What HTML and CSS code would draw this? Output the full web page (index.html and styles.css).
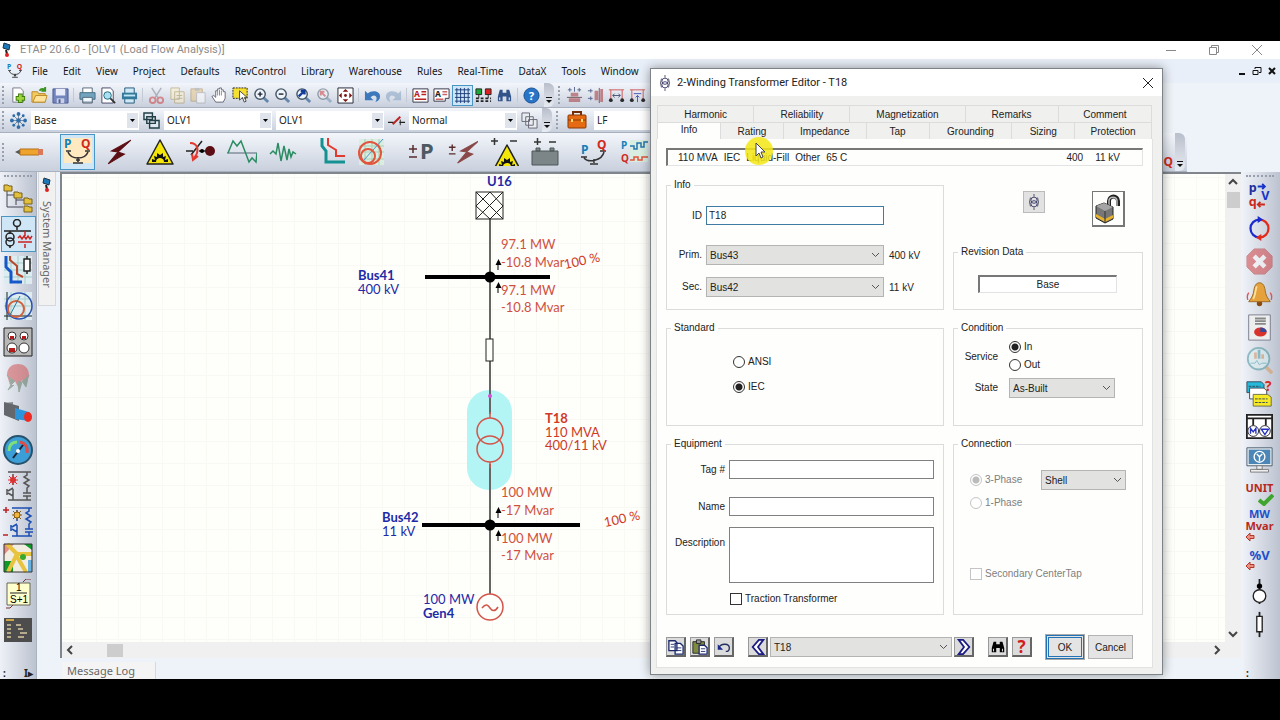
FILE: index.html
```html
<!DOCTYPE html>
<html lang="en">
<head>
    <meta charset="UTF-8">
    <meta name="viewport" content="width=device-width, initial-scale=1.0">
    <title>ETAP 20.6.0 - [OLV1 (Load Flow Analysis)]</title>
    <link rel="stylesheet" href="styles.css">
</head>
<body>
<!-- shapes used more than once -->
<svg class="defs" width="0" height="0">
    <symbol id="bolt" viewBox="0 0 26 26"><path d="M24 2L6 12l6 1-9 11 15-9-6-2z" /></symbol>
    <symbol id="warning" viewBox="0 0 28 28">
        <path d="M14 2L27 26H1z" fill="#f5e60a" stroke="#222" stroke-width="1.5" stroke-linejoin="round"/>
        <path d="M6 24v-3l3 1-1-4 3 1v-4l3 2 3-2v4l3-1-1 4 3-1v3h-4c0-3-2-4-4-4s-4 1-4 4z" fill="#111"/>
    </symbol>
    <symbol id="scale" viewBox="0 0 28 28">
        <path d="M2 13h5M21 13h5M4 14c2 5 6 6 10 6s8-1 10-6M14 19v5M9 25h10M12 22h4" fill="none" stroke="#333" stroke-width="1.6"/>
        <text x="0" y="10" font-size="12" fill="#1580b8">P</text>
        <text x="17" y="10" font-size="12" fill="#cf2a1c">Q</text>
    </symbol>
    <symbol id="etap" viewBox="0 0 12 16">
        <path d="M3 1l6 2-1 5-6-2z" fill="#1c78b8" stroke="#234" /><path d="M5 8l1 4" stroke="#222" stroke-width="2"/><circle cx="6" cy="13" r="2" fill="#d22"/>
    </symbol>
    <symbol id="lens" viewBox="0 0 18 18">
        <path d="M11 11l5 5" stroke="#6687ad" stroke-width="3"/><circle cx="7.5" cy="7.5" r="5.5" fill="#eef5fb" stroke="#456" stroke-width="1.5"/>
    </symbol>
    <symbol id="binoc" viewBox="0 0 18 18">
        <path d="M4 3h3v3h4V3h3l2 7v5h-5v-5H7v5H2v-5z"/><path d="M4 11v3M14 11v3" stroke="#fff"/>
    </symbol>
    <symbol id="winding" viewBox="0 0 12 18">
        <path d="M6 0v3M6 15v3M2 4L1 9l1 5M10 4l1 5-1 5" fill="none" stroke="#445"/><circle cx="6" cy="7" r="3.5" fill="none" stroke="#336"/><circle cx="6" cy="11" r="3.5" fill="none" stroke="#336"/>
    </symbol>
    <symbol id="back" viewBox="0 0 10 10"><path d="M1 5l4-4v2.5h4v3H5V9z" fill="#e99080" stroke="#b3382a"/></symbol>
</svg>

<div class="app">
    <header class="titlebar">
        <svg class="app-icon" width="12" height="16"><use href="#etap"/></svg>
        <span class="title">ETAP 20.6.0 - [OLV1 (Load Flow Analysis)]</span>
        <div class="window-controls">
            <button aria-label="Minimize"><svg width="12" height="12"><path d="M1 6.5h10"/></svg></button>
            <button aria-label="Restore"><svg width="12" height="12"><path d="M1.5 3.5h7v7h-7zM3.5 3v-1.5h7v7H9"/></svg></button>
            <button aria-label="Close"><svg width="12" height="12"><path d="M1 1l10 10M11 1L1 11"/></svg></button>
        </div>
    </header>

    <nav class="menubar">
        <svg class="menu-icon" width="16" height="16"><use href="#scale"/></svg>
        <button>File</button>
        <button>Edit</button>
        <button>View</button>
        <button>Project</button>
        <button>Defaults</button>
        <button>RevControl</button>
        <button>Library</button>
        <button>Warehouse</button>
        <button>Rules</button>
        <button>Real-Time</button>
        <button>DataX</button>
        <button>Tools</button>
        <button>Window</button>
        <div class="doc-controls">
            <svg width="8" height="10"><path d="M1 8h6"/></svg>
            <svg class="thin" width="10" height="10"><path d="M1 4.5h5v4H1zM3 3V1.5h6v5H7"/></svg>
            <svg width="8" height="10"><path d="M1 2l6 6M7 2L1 8"/></svg>
        </div>
    </nav>

    <div class="toolbar toolbar-main">
        <span class="grip"></span>
        <button><svg viewBox="0 0 18 18"><path d="M3 1h8l3 3v12H3z" fill="#fff" stroke="#778"/><path d="M11 7v10M6 12h10" stroke="#3f7d10" stroke-width="5"/><path d="M11 8v8M7 12h8" stroke="#9cd53b" stroke-width="3"/></svg></button>
        <button><svg viewBox="0 0 18 18"><path d="M1 16V5h6l1 2h7v9z" fill="#f4c95d" stroke="#b98a2c"/><path d="M2 16l3-7h12l-2 7z" fill="#ffe39a" stroke="#b98a2c"/><path d="M9 4c2-3 4-2 6-1M15 0v4h-4" fill="none" stroke="#3a9420" stroke-width="2"/></svg></button>
        <button><svg viewBox="0 0 18 18"><path d="M1 2h16v15H1z" fill="#7385bd" stroke="#4c5c94"/><path d="M4 2h10v7H4z" fill="#e8ecfa"/><path d="M5 12h8v5H5z" fill="#c8cfe6"/><path d="M7 13h2v4H7z" fill="#4c5c94"/></svg></button>
        <span class="sep"></span>
        <button><svg viewBox="0 0 18 18"><path d="M4 1h10v6H4zM4 11h10v6H4z" fill="#fff" stroke="#567"/><path d="M1 6h16v7H1z" fill="#72a4bf" stroke="#446b83"/><path d="M4 11h10v5H4z" fill="#eef8ff" stroke="#567"/></svg></button>
        <button><svg viewBox="0 0 18 18"><path d="M2 1h9l3 3v13H2z" fill="#fff" stroke="#446"/><path d="M10 11l6 6" stroke="#333" stroke-width="2"/><circle cx="8" cy="9" r="4" fill="#a9e0f2" stroke="#267"/></svg></button>
        <button><svg viewBox="0 0 18 18"><path d="M4 1h10v16H4z" fill="#cfeaf6" stroke="#257"/><path d="M1 6h16v7H1z" fill="#34789a"/><path d="M3 9h12" stroke="#bfe6f7" stroke-width="2"/></svg></button>
        <span class="sep"></span>
        <button class="off"><svg viewBox="0 0 18 18"><path d="M4 1l7 11M14 1L7 12" stroke="#778" stroke-width="1.5"/><circle cx="5" cy="14" r="3" fill="none" stroke="#c33" stroke-width="2"/><circle cx="13" cy="14" r="3" fill="none" stroke="#c33" stroke-width="2"/></svg></button>
        <button class="off"><svg viewBox="0 0 18 18"><path d="M2 1h9v12H2zM6 5h10v12H6z" fill="#fdf1c9" stroke="#a68a44"/><path d="M8 9h6M8 12h6" stroke="#a68a44"/></svg></button>
        <button class="off"><svg viewBox="0 0 18 18"><path d="M1 2h12v13H1z" fill="#e8c37c" stroke="#a0803c"/><path d="M5 1h5v3H5z" fill="#999"/><path d="M7 6h9v11H7z" fill="#fff" stroke="#999"/></svg></button>
        <button><svg viewBox="0 0 18 18"><path d="M5 16l-4-6 2-1 2 2V4h2V2h2V1h2v2h2v2h2v7l-2 4z" fill="#fff" stroke="#667"/><path d="M7 4v5M9 3v6M11 4v5" stroke="#889"/></svg></button>
        <button><svg viewBox="0 0 18 18"><path d="M1 1h15v11H1z" fill="#f7df32" stroke="#222" stroke-dasharray="2 1"/><path d="M8 4v10l3-3 2 5 2-1-2-4h3z" fill="#fff" stroke="#444"/></svg></button>
        <button><svg viewBox="0 0 18 18"><use href="#lens"/><path d="M5 7.5h5M7.5 5v5" stroke="#223" stroke-width="1.5"/></svg></button>
        <button><svg viewBox="0 0 18 18"><use href="#lens"/><path d="M5 7.5h5" stroke="#223" stroke-width="1.5"/></svg></button>
        <button><svg viewBox="0 0 18 18"><use href="#lens"/><path d="M4 10l5-5M6 4h4v4" stroke="#113a9a" stroke-width="2.5" fill="none"/></svg></button>
        <button class="off"><svg viewBox="0 0 18 18"><use href="#lens"/><path d="M10 10L5 5M5 9V5h4" stroke="#c33" stroke-width="2" fill="none"/></svg></button>
        <button><svg viewBox="0 0 18 18"><path d="M1 1h16v16H1z" fill="#fff" stroke="#223"/><path d="M9 2l3 3H6zM9 16l3-3H6zM2 9l3-3v6zM16 9l-3-3v6z" fill="#7c1414"/><circle cx="9" cy="9" r="1.5" fill="#7c1414"/></svg></button>
        <span class="sep"></span>
        <button><svg viewBox="0 0 18 18"><path d="M1 4l3 3c4-4 13-3 13 3 0 3-2 5-5 6 2-3 2-6-1-7-2 0-3 1-4 2l3 3H1z" fill="#3c78bb"/></svg></button>
        <button class="off"><svg viewBox="0 0 18 18"><path d="M17 4l-3 3C10 3 1 4 1 10c0 3 2 5 5 6-2-3-2-6 1-7 2 0 3 1 4 2l-3 3h9z" fill="#7c9cbd"/></svg></button>
        <span class="sep"></span>
        <button><svg viewBox="0 0 18 18"><path d="M1 2h16v14H1z" fill="#fff" stroke="#334"/><text x="2" y="11" font-size="9" fill="#b22">A</text><path d="M10 5h5M10 8h5M3 13h12" stroke="#b22" stroke-width="1.5"/></svg></button>
        <button><svg viewBox="0 0 18 18"><path d="M1 2h16v10h-4v3H1z" fill="#fff" stroke="#334"/><text x="2" y="11" font-size="9" fill="#222">A</text><path d="M10 5h5M10 8h5M3 13h8" stroke="#c66" stroke-width="1.5"/></svg></button>
        <button class="on"><svg viewBox="0 0 18 18"><path d="M3 1v16M7 1v16M11 1v16M15 1v16M1 3h16M1 7h16M1 11h16M1 15h16" stroke="#1b3c78"/></svg></button>
        <button><svg viewBox="0 0 18 18"><path d="M1 2h6v6H1z" fill="#18a838" stroke="#222"/><path d="M11 2h6v6h-6z" fill="#dd2020" stroke="#222"/><path d="M4 8v4M14 8v4" stroke="#222"/><path d="M1 12h16M1 15h16" stroke="#222" stroke-width="2" stroke-dasharray="3 2"/></svg></button>
        <button><svg viewBox="0 0 18 18" fill="#31548a"><use href="#binoc"/></svg></button>
        <span class="sep"></span>
        <button><svg viewBox="0 0 18 18"><circle cx="9" cy="9" r="8" fill="#2874c7" stroke="#174f91"/><text x="6" y="14" font-size="12" fill="#fff">?</text></svg></button>
        <span class="cap"></span>
        <span class="grip"></span>
        <button class="dim"><svg viewBox="0 0 18 18"><path d="M9 0v5M2 3h4M12 3h4M4 1v4M14 1v4" stroke="#347"/><path d="M5 6h8v4H5zM3 12h12v4H3z" fill="#b56a72"/><path d="M1 11h16" stroke="#533"/></svg></button>
        <button class="dim"><svg viewBox="0 0 18 18"><path d="M1 4h5M1 12h5M4 2v4M4 10v4" stroke="#347"/><path d="M8 4h4v10H8zM14 2h3v14h-3z" fill="#b56a72"/><path d="M13 1v16" stroke="#533"/></svg></button>
        <button class="dim"><svg viewBox="0 0 18 18"><path d="M1 3h16M3 3v10M15 3v10" stroke="#c33"/><path d="M5 9h8M7 7L5 9l2 2M11 7l2 2-2 2" stroke="#235" fill="none"/><circle cx="3" cy="14" r="2"/><circle cx="15" cy="14" r="2"/></svg></button>
        <button class="dim"><svg viewBox="0 0 18 18"><path d="M1 3h16M3 3v10M15 3v10" stroke="#c33"/><path d="M5 7h8M9 16V9M7 11l2-2 2 2" stroke="#23a" fill="none"/><circle cx="3" cy="14" r="2"/><circle cx="15" cy="14" r="2"/></svg></button>
    </div>

    <div class="toolbar toolbar-view">
        <span class="grip"></span>
        <button><svg viewBox="0 0 18 18"><path d="M9 2v14M2 9h14M4 4l10 10M14 4L4 14" stroke="#789"/><g fill="#2c6cab"><circle cx="9" cy="9" r="2.5"/><circle cx="9" cy="2" r="2"/><circle cx="9" cy="16" r="2"/><circle cx="2" cy="9" r="2"/><circle cx="16" cy="9" r="2"/><circle cx="4" cy="4" r="1.5"/><circle cx="14" cy="14" r="1.5"/><circle cx="14" cy="4" r="1.5"/><circle cx="4" cy="14" r="1.5"/></g></svg></button>
        <select class="tool-select" aria-label="Revision"><option>Base</option></select>
        <button><svg viewBox="0 0 18 18"><path d="M1 1h9v7H1zM4 5h9v7H4zM7 9h10v8H7z" fill="#dfe8ee" stroke="#223f48" stroke-width="1.5"/></svg></button>
        <select class="tool-select" aria-label="Presentation"><option>OLV1</option></select>
        <select class="tool-select" aria-label="View"><option>OLV1</option></select>
        <button><svg viewBox="0 0 18 18"><path d="M0 11h6M12 11h6" stroke="#222" stroke-width="1.5"/><path d="M5 13l8-8" stroke="#b22" stroke-width="2"/><path d="M13 8v6" stroke="#222"/></svg></button>
        <select class="tool-select" aria-label="Configuration"><option>Normal</option></select>
        <button><svg viewBox="0 0 18 18"><path d="M1 1h8v9H1zM5 5h8v9H5zM8 8h9v9H8z" fill="#e9edf0" stroke="#667"/></svg></button>
        <span class="cap"></span>
        <span class="grip"></span>
        <button class="case"><svg viewBox="0 0 20 18"><path d="M6 4V1h8v3" fill="none" stroke="#722d05" stroke-width="2"/><rect x="1" y="4" width="18" height="13" rx="1" fill="#e66a12" stroke="#8a3806"/><path d="M1 9h18" stroke="#8a3806"/><path d="M4 8h2v3H4zM14 8h2v3h-2z" fill="#ffd76a"/></svg></button>
        <select class="tool-select" aria-label="Study case"><option>LF</option></select>
    </div>

    <div class="toolbar toolbar-study">
        <span class="grip"></span>
        <button><svg viewBox="0 0 28 28"><path d="M0 14l6-3v6z" fill="#555"/><path d="M5 11h19v6H5z" fill="#efa42e" stroke="#b5701a"/><path d="M23 11h5v6h-5z" fill="#d9795a"/></svg></button>
        <span class="sep"></span>
        <button class="on"><svg viewBox="0 0 28 28"><path d="M0 0h28v25H0z" fill="#ffe9c0"/><use href="#scale"/></svg></button>
        <button><svg viewBox="0 0 28 28" fill="#5b0f14" stroke="#5b0f14"><use href="#bolt"/></svg></button>
        <button><svg viewBox="0 0 28 28"><use href="#warning"/></svg></button>
        <button><svg viewBox="0 0 30 28"><path d="M0 13h7M5 17L16 3M13 13h8" stroke="#222" stroke-width="1.5"/><path d="M4 5c8 0 10 8 4 15M12 18l-5 4-1-6" fill="none" stroke="#e23a2e" stroke-width="2"/><circle cx="16" cy="13" r="2"/><circle cx="24" cy="13" r="5" fill="#5b0f14"/></svg></button>
        <button><svg viewBox="0 0 30 28"><path d="M0 15h30" stroke="#567"/><path d="M1 15L6 3l4 5 4-5 8 21 3-4 4 4 1-9" fill="none" stroke="#2b8c62" stroke-width="1.5"/></svg></button>
        <button><svg viewBox="0 0 28 28"><path d="M1 16l3-3 3 3 2-11 3 18 3-15 3 14 2-11 2 8 2-5 3 2" fill="none" stroke="#2b8c62" stroke-width="1.5"/></svg></button>
        <span class="sep"></span>
        <button><svg viewBox="0 0 28 28"><path d="M4 0v8l4 5v11h19" fill="none" stroke="#149292" stroke-width="3"/><path d="M10 0v7l8 5v6h9" fill="none" stroke="#e23a2e" stroke-width="2"/></svg></button>
        <button class="curve"><svg viewBox="0 0 28 28"><path d="M2 1h25v26H2z" fill="#d9eee0"/><path d="M8 1v26M15 1v26M22 1v26M2 8h25M2 14h25M2 21h25" stroke="#a9cfb5"/><path d="M26 1L6 23" stroke="#4c93c8"/><circle cx="13" cy="15" r="11" fill="none" stroke="#e2543e" stroke-width="2"/><circle cx="11" cy="18" r="7" fill="none" stroke="#e2543e" stroke-width="2"/></svg></button>
        <span class="sep"></span>
        <button><svg viewBox="0 0 28 28"><path d="M1 11h8M5 7v8M1 19h8" stroke="#5a2d2d" stroke-width="1.5"/><text x="12" y="21" font-size="22" fill="#4c5a63">P</text></svg></button>
        <button><svg viewBox="0 0 32 28"><path d="M1 9h7M4.5 6v7M1 16h7" stroke="#5a2d2d" stroke-width="1.5"/><svg x="6" width="26" height="26" fill="#8a4848" stroke="#8a4848"><use href="#bolt"/></svg></svg></button>
        <button><svg viewBox="0 0 28 28"><path d="M1 3h7M4.5 0v7M20 3h7" stroke="#333" stroke-width="1.5"/><svg x="2" y="5" width="24" height="23"><use href="#warning"/></svg></svg></button>
        <button><svg viewBox="0 0 28 28"><path d="M3 4h7M6.5 0v7M18 4h7" stroke="#333" stroke-width="1.5"/><path d="M1 13h26v14H1zM5 10h4v3H5zM19 10h4v3h-4z" fill="#7c8688" stroke="#4c5658"/></svg></button>
        <span class="sep"></span>
        <button><svg viewBox="0 0 28 28"><path d="M1 19h6M20 13h6M4 20c4 5 18 3 20-6M14 21v4M10 26h8" fill="none" stroke="#333" stroke-width="1.5"/><text x="1" y="16" font-size="12" fill="#1580b8">P</text><text x="17" y="11" font-size="12" fill="#cf2a1c">Q</text></svg></button>
        <button><svg viewBox="0 0 28 28"><path d="M9 2h18v22H9z" fill="#d9eee0"/><text x="0" y="11" font-size="10" fill="#1580b8">P</text><text x="0" y="24" font-size="10" fill="#cf2a1c">Q</text><path d="M9 8h4v3h3V5h4v4h3V4h4" fill="none" stroke="#2476ae" stroke-width="1.5"/><path d="M9 22h4v-3h4v3h4v-3h6" fill="none" stroke="#e2543e" stroke-width="1.5"/></svg></button>
        <span class="filler"></span>
        <span class="last-letter">Q</span>
        <span class="cap"></span>
    </div>

    <div class="workspace">
        <aside class="sidebar">
            <span class="grip-h"></span>
            <button><svg viewBox="0 0 30 30"><path d="M4 7v17h16M4 12h8M13 14v8M13 17h8" fill="none" stroke="#445"/><g fill="#e3bf3e" stroke="#76601b"><path d="M1 2h4l1 1h3v5H1zM11 9h4l1 1h3v5h-8zM21 15h4l1 1h3v5h-8zM21 23h4l1 1h3v5h-8z"/></g></svg></button>
            <button class="on"><svg viewBox="0 0 30 30"><g fill="none" stroke="#222" stroke-width="1.5"><circle cx="14" cy="4" r="3.5"/><path d="M14 8v3M1 12h27M7 12v3M7 26v3"/><circle cx="7" cy="18" r="4"/><circle cx="7" cy="23" r="4"/></g><path d="M22 12v5M22 25v4M15 19l2-2 2 3 2-3 2 3 2-3 2 3 2-3M15 23h14" fill="none" stroke="#c22" stroke-width="1.5"/></svg></button>
            <button><svg viewBox="0 0 30 30"><path d="M1 1h28v28H1z" fill="#dcecf0"/><path d="M8 1v28M15 1v28M22 1v28M1 8h28M1 15h28M1 22h28" stroke="#a7cdc9"/><path d="M3 1v11l5 5v10h11" fill="none" stroke="#1658c8" stroke-width="3"/><path d="M7 1v4l7 6v8l6 3" fill="none" stroke="#b6482d" stroke-width="2"/><path d="M21 4h6v12h-6zM24 1v3M24 16v3" fill="#fff" stroke="#222" stroke-width="1.5"/></svg></button>
            <button><svg viewBox="0 0 30 30"><path d="M1 1h28v28H1z" fill="#dcecf0"/><path d="M8 1v28M22 1v28M1 8h28M1 15h28" stroke="#a7cdc9"/><path d="M4 1v28M1 25h28" stroke="#222"/><circle cx="16" cy="15" r="13" fill="none" stroke="#2b50b2" stroke-width="1.5"/><circle cx="13" cy="18" r="8" fill="none" stroke="#d0603e" stroke-width="2"/><path d="M6 26L17 5" stroke="#257b9b"/></svg></button>
            <button><svg viewBox="0 0 30 30"><path d="M1 1h28v28H1z" fill="#b8b8b8" stroke="#222"/><g fill="#fff" stroke="#333"><circle cx="9" cy="9" r="4"/><circle cx="21" cy="9" r="4"/><circle cx="9" cy="21" r="5"/><circle cx="21" cy="21" r="5"/></g><path d="M7 9h4v3H7zM19 9h4v3h-4zM6 21h6v4H6z" fill="#b31a1a"/></svg></button>
            <button class="off"><svg viewBox="0 0 30 30"><path d="M4 12c0-8 6-11 11-11s11 3 11 11l-2 10-5-5-3 9-4-8-5 4z" fill="#d24a4a"/><path d="M4 12l3 4 1 6 4-4M26 12l-2 4-1 8-4-6M8 22l-3 5 6-5M15 18l1 11 3-10" fill="#57755a" stroke="#57755a"/></svg></button>
            <button><svg viewBox="0 0 30 30"><path d="M1 4l9-1v15l-9-3z" fill="#85898d"/><path d="M1 3l15 4v15L1 16z" fill="#64686c"/><path d="M12 9l14 4v9l-14-2z" fill="#2c94da"/><ellipse cx="25" cy="18" rx="4" ry="5" fill="#ee2b20"/></svg></button>
            <button><svg viewBox="0 0 30 30"><circle cx="15" cy="15" r="14" fill="#3b9ed6" stroke="#28516c" stroke-width="2"/><path d="M6 16c0-7 4-9 8-9" fill="none" stroke="#7ddf76" stroke-width="3"/><path d="M17 7c5 1 8 5 7 11" fill="none" stroke="#e14b45" stroke-width="3"/><path d="M10 23L20 10" stroke="#223" stroke-width="2"/><circle cx="15" cy="16" r="2" fill="#fff"/></svg></button>
            <button><svg viewBox="0 0 30 30"><path d="M5 1h23M5 29h23M10 3v11M10 18v11M4 18v6M5 20l5-3M5 22l5 3M24 1v3l-3 2 5 3-5 3 5 3-2 2v5M20 22h8M20 25h8M24 25v4" fill="none" stroke="#555" stroke-width="1.5"/><circle cx="10" cy="9" r="3" fill="#d33"/><path d="M10 4v10M5 9h10M6 5l8 8M14 5l-8 8" stroke="#d33"/></svg></button>
            <button><svg viewBox="0 0 30 30"><path d="M9 1h20M9 29h20M14 3v11M14 18v11M8 18v6M9 20l5-3M9 22l5 3M26 1v3l-3 2 5 3-5 3 5 3-2 2v5M22 22h8M22 25h8M26 25v4" fill="none" stroke="#1c4fb3" stroke-width="1.5"/><path d="M14 3v10M9 8h10M10 4l8 8M18 4l-8 8" stroke="#8a5b10"/><circle cx="14" cy="8" r="3" fill="#f0b53a" stroke="#8a5b10"/><path d="M0 3h6M3 0v6M0 28h5" stroke="#b22" stroke-width="1.5"/></svg></button>
            <button><svg viewBox="0 0 30 30"><path d="M1 1h28v28H1z" fill="#f1ede0"/><path d="M1 1h10L1 12z" fill="#e58f84"/><path d="M1 18h9v11H1zM21 1h8v6z" fill="#0d9a26"/><path d="M25 29V17h4v12z" fill="#6ab1df"/><path d="M4 1l10 10-9 18M14 11h15M13 12l10 17" fill="none" stroke="#e8c33d" stroke-width="4"/><circle cx="20" cy="14" r="3" fill="#3aa82e"/><path d="M1 1h28v28H1z" fill="none" stroke="#333"/></svg></button>
            <button><svg viewBox="0 0 30 30"><path d="M4 4h23v22H4z" fill="#ffffce" stroke="#665"/><path d="M7 14h17" stroke="#222"/><text x="13" y="12" font-size="10" class="plain">1</text><text x="7" y="24" font-size="10" class="plain">S+1</text><path d="M20 3l3-3h5M3 29h4l3-3" stroke="#733" fill="none"/></svg></button>
            <button><svg viewBox="0 0 30 30"><path d="M1 3h28v24H1z" fill="#4d4d4d"/><path d="M3 5h8" stroke="#c9a348" stroke-width="2"/><path d="M4 10h4M4 14h4M4 18h4M4 22h4M13 10h5M15 14h5M17 18h7M15 22h6" stroke="#d9c9a4" stroke-width="1.5"/></svg></button>
            <div class="sidebar-end"><span>:</span><span>I▸</span></div>
        </aside>

        <div class="manager">
            <div class="manager-tab">
                <svg width="12" height="16"><use href="#etap"/></svg>
                <span>System Manager</span>
            </div>
        </div>

        <main class="center">
            <div class="canvas-frame">
                <!-- one line diagram -->
                <svg class="diagram">
                    <defs>
                        <pattern id="grid" width="22" height="22" patternUnits="userSpaceOnUse"><path d="M12.5 0v22M0 3.5h22"/></pattern>
                    </defs>
                    <rect class="grid" width="100%" height="100%" fill="url(#grid)"/>
                    <rect class="highlight" x="405" y="216" width="45" height="100" rx="22"/>
                    <path class="wire" d="M428 44v196M428 290v130"/>
                    <rect class="symbol" x="414" y="18" width="27" height="27"/>
                    <path class="symbol" d="M414 18l27 27M441 18l-27 27M428 18l-14 14 14 13 13-13z"/>
                    <rect class="symbol" x="424" y="165" width="7" height="22"/>
                    <g class="red-symbol">
                        <path d="M428 238v6M428 288v6"/>
                        <circle cx="428" cy="257" r="13"/>
                        <circle cx="428" cy="275" r="13"/>
                        <circle class="gen" cx="428" cy="433" r="13"/>
                        <path d="M420 434c4-5 6-3 8 0s5 4 8-1"/>
                    </g>
                    <circle cx="428" cy="222" r="2" fill="#d64fd6"/>
                    <path class="bus" d="M363 103h125M360 351h158"/>
                    <circle cx="428" cy="103" r="5.5"/>
                    <circle cx="428" cy="351" r="5.5"/>
                    <path class="arrow" d="M436 96v-6M436 119v-6M436 344v-6M436 367v-6"/>
                    <path d="M433.5 91l3-6 3 6zM433.5 114l3-6 3 6zM433.5 339l3-6 3 6zM433.5 362l3-6 3 6z"/>

                    <g class="blue">
                        <text class="bold" x="425" y="12">U16</text>
                        <text class="bold" x="296" y="106">Bus41</text>
                        <text x="296" y="120">400 kV</text>
                        <text class="bold" x="320" y="348">Bus42</text>
                        <text x="320" y="362">11 kV</text>
                        <text x="361" y="430">100 MW</text>
                        <text class="bold" x="361" y="444">Gen4</text>
                    </g>
                    <g class="red">
                        <text class="bold" x="483" y="249">T18</text>
                        <text x="483" y="263">110 MVA</text>
                        <text x="483" y="276">400/11 kV</text>
                        <text x="0" y="0" transform="translate(503 95) rotate(-12)">100 %</text>
                        <text x="0" y="0" transform="translate(543 353) rotate(-12)">100 %</text>
                    </g>
                    <g class="flow">
                        <text x="439" y="75">97.1 MW</text>
                        <text x="439" y="93">-10.8 Mvar</text>
                        <text x="439" y="121">97.1 MW</text>
                        <text x="439" y="138">-10.8 Mvar</text>
                        <text x="439" y="323">100 MW</text>
                        <text x="439" y="341">-17 Mvar</text>
                        <text x="439" y="369">100 MW</text>
                        <text x="439" y="386">-17 Mvar</text>
                    </g>
                </svg>
                <div class="vscroll">
                    <svg width="10" height="8"><path d="M1 6l4-4 4 4"/></svg>
                    <span class="thumb"></span>
                    <svg class="end" width="10" height="8"><path d="M1 2l4 4 4-4"/></svg>
                </div>
                <div class="hscroll">
                    <svg width="8" height="10"><path d="M6 1L2 5l4 4"/></svg>
                    <span class="thumb"></span>
                    <svg class="end" width="8" height="10"><path d="M2 1l4 4-4 4"/></svg>
                </div>
            </div>
            <div class="message-log">Message Log</div>
        </main>

        <aside class="sidebar sidebar-right">
            <span class="grip-h"></span>
            <button><svg viewBox="0 0 24 30"><text x="0" y="11" font-size="14" fill="#1c2f9c">p</text><text x="0" y="27" font-size="14" fill="#cc2a1c">q</text><text x="14" y="20" font-size="14" fill="#1732c8">V</text><path d="M10 5h8M15 2l3 3-3 3" fill="none" stroke="#1732c8" stroke-width="2"/><path d="M18 25h-7M13 22l-3 3 3 3" fill="none" stroke="#cc2a1c" stroke-width="2"/></svg></button>
            <button><svg viewBox="0 0 30 30"><path d="M15 25a10 10 0 0 1 0-20" fill="none" stroke="#1c2bd0" stroke-width="2.5"/><path d="M15 5a10 10 0 0 1 0 20" fill="none" stroke="#e22a1c" stroke-width="2.5"/><path d="M13 1l6 4-6 4z" fill="#1c2bd0"/><path d="M17 21l-6 4 6 4z" fill="#e22a1c"/></svg></button>
            <button class="faded"><svg viewBox="0 0 30 30"><path d="M9 1h12l8 8v12l-8 8H9l-8-8V9z" fill="#d13434" stroke="#a33"/><path d="M9 9l12 12M21 9L9 21" stroke="#fff" stroke-width="5"/></svg></button>
            <button><svg viewBox="0 0 30 30"><ellipse cx="15" cy="25" rx="3" ry="3" fill="#8a4a0c"/><path d="M15 2c6 0 6 8 7 12s3 6 5 9H3c2-3 4-5 5-9s1-12 7-12z" fill="#e5a13c" stroke="#9a6420"/><path d="M12 6c-2 4-1 9-4 14" stroke="#ffe2a0" stroke-width="2" fill="none"/><path d="M3 13c-2 3-2 5-1 8M27 13c2 3 2 5 1 8" fill="none" stroke="#d55" stroke-width="1.5"/></svg></button>
            <button><svg viewBox="0 0 30 30"><path d="M3 1h24v28H3z" fill="#ecefee" stroke="#778"/><path d="M10 5h12M10 8h12M10 11h12" stroke="#888" stroke-width="2"/><ellipse cx="16" cy="20" rx="7" ry="5" fill="#d8322a"/><path d="M16 20v-5a7 5 0 0 1 7 5z" fill="#354a9a"/></svg></button>
            <button class="faded"><svg viewBox="0 0 30 30"><path d="M22 22l7 7" stroke="#d9924c" stroke-width="4"/><circle cx="14" cy="13" r="12" fill="#d9f0f0" stroke="#3c8c96" stroke-width="2"/><path d="M9 6h3v7H9zM17 8h3v5h-3z" fill="#d98b52"/><path d="M13 3h3v10h-3z" fill="#39a"/><path d="M5 18h5l2-3 3 5 2-2h6" fill="none" stroke="#39a"/></svg></button>
            <button><svg viewBox="0 0 30 30"><path d="M1 2h16l3 3v9H1z" fill="#25b9da" stroke="#345"/><path d="M4 9h16l3 3v9H4z" fill="#fff" stroke="#345"/><path d="M8 16h16l4 3v10H8z" fill="#f6e926" stroke="#664"/><path d="M3 7h13M10 21h14M10 25h14" stroke="#345" stroke-dasharray="3 1"/><text x="21" y="12" font-size="15" fill="#d62a20">?</text></svg></button>
            <button><svg viewBox="0 0 30 30"><path d="M1 2h28v26H1zM1 6h28M8 6v8M22 6v8" fill="#fff" stroke="#222" stroke-width="2"/><circle cx="8" cy="20" r="6" fill="#fff" stroke="#222"/><circle cx="21" cy="20" r="6" fill="#fff" stroke="#222"/><path d="M5 23v-6l3 4 3-4v6M17 18h8l-4 6z" fill="none" stroke="#2330c0" stroke-width="1.5"/></svg></button>
            <button><svg viewBox="0 0 30 30"><path d="M1 2h28v20H1z" fill="#e8edf0" stroke="#456"/><path d="M3 4h24v16H3z" fill="#4c86b6"/><circle cx="15" cy="12" r="6" fill="none" stroke="#fff" stroke-width="1.5"/><path d="M12 9l3 3 3-3M15 12v5" fill="none" stroke="#fff" stroke-width="1.5"/><path d="M12 22h6v4h-6zM5 26h20v3H5z" fill="#eee" stroke="#777"/></svg></button>
            <div class="readout first"><b class="r">UNIT</b><svg width="16" height="12" viewBox="0 0 16 12"><path d="M1 6l5 4 9-9" fill="none" stroke="#3fa52e" stroke-width="4"/></svg></div>
            <div class="readout"><b class="b">MW</b><b class="r">Mvar</b><svg class="left" width="10" height="10"><use href="#back"/></svg></div>
            <div class="readout last"><b class="b">%V</b><svg class="left" width="10" height="10"><use href="#back"/></svg></div>
            <button><svg viewBox="0 0 30 30"><path d="M15 1v12M15 26v3" stroke="#222" stroke-width="2"/><circle cx="15" cy="9" r="3"/><circle cx="15" cy="20" r="7" fill="#fff" stroke="#222" stroke-width="1.5"/></svg></button>
            <button><svg viewBox="0 0 30 30"><path d="M15 1v28" stroke="#222" stroke-width="2"/><path d="M12 6h6v17h-6z" fill="#fff" stroke="#222" stroke-width="1.5"/></svg></button>
            <div class="sidebar-end"><span>:</span></div>
        </aside>
    </div>
</div>

<form class="dialog">
    <div class="dialog-title">
        <svg width="12" height="16"><use href="#winding"/></svg>
        <span>2-Winding Transformer Editor - T18</span>
        <button type="button" aria-label="Close"><svg width="12" height="12"><path d="M1 1l10 10M11 1L1 11"/></svg></button>
    </div>

    <div class="dialog-body">
        <div class="tabs tabs-back">
            <button type="button">Harmonic</button>
            <button type="button">Reliability</button>
            <button type="button">Magnetization</button>
            <button type="button">Remarks</button>
            <button type="button">Comment</button>
        </div>
        <div class="tabs tabs-front">
            <button type="button" class="active">Info</button>
            <button type="button">Rating</button>
            <button type="button">Impedance</button>
            <button type="button">Tap</button>
            <button type="button">Grounding</button>
            <button type="button">Sizing</button>
            <button type="button">Protection</button>
        </div>

        <div class="panel">
            <div class="summary">
                <span>110 MVA</span><span>IEC</span><span>Liquid-Fill</span><span>Other</span><span>65 C</span>
                <span class="volts">400</span><span>11 kV</span>
            </div>

            <div class="groups">
                <fieldset class="info">
                    <legend>Info</legend>
                    <div class="field id-row"><label for="id">ID</label><input type="text" id="id" value="T18"></div>
                    <div class="field prim-row"><label for="prim">Prim.</label><select id="prim"><option>Bus43</option></select><span>400 kV</span></div>
                    <div class="field"><label for="sec">Sec.</label><select id="sec"><option>Bus42</option></select><span>11 kV</span></div>
                </fieldset>

                <div class="side">
                    <div class="side-buttons">
                        <button type="button" class="symbol-btn" aria-label="Symbol"><svg width="12" height="16"><use href="#winding"/></svg></button>
                        <button type="button" class="lock-btn" aria-label="Lock">
                            <svg width="28" height="30" viewBox="0 0 28 30"><path d="M15 14V7c0-6 9-6 9 0v5" fill="none" stroke="#222" stroke-width="4"/><path d="M15 13V7c0-5 8-5 8 0v5" fill="none" stroke="#bbb" stroke-width="1.5"/><path d="M2 12l8-3 9 4v12l-8 4-9-5z" fill="#777" stroke="#222"/><path d="M2 12l8-3 9 4-8 4z" fill="#a5a5a5"/><path d="M2 20l9 5 8-4v3l-8 4-9-5z" fill="#e9b228"/><path d="M11 17v12" stroke="#333"/></svg>
                        </button>
                    </div>
                    <fieldset class="revision">
                        <legend>Revision Data</legend>
                        <input type="text" aria-label="Revision Data" value="Base" readonly>
                    </fieldset>
                </div>

                <fieldset class="standard">
                    <legend>Standard</legend>
                    <label><input type="radio" name="standard"> ANSI</label>
                    <label><input type="radio" name="standard" checked> IEC</label>
                </fieldset>

                <fieldset class="condition">
                    <legend>Condition</legend>
                    <div class="field service">
                        <span class="name">Service</span>
                        <div class="radios">
                            <label><input type="radio" name="service" checked> In</label>
                            <label><input type="radio" name="service"> Out</label>
                        </div>
                    </div>
                    <div class="field"><label class="name" for="state">State</label><select id="state"><option>As-Built</option></select></div>
                </fieldset>

                <fieldset class="equipment">
                    <legend>Equipment</legend>
                    <div class="field tag-row"><label for="tag">Tag #</label><input type="text" id="tag"></div>
                    <div class="field name-row"><label for="name">Name</label><input type="text" id="name"></div>
                    <div class="field desc-row"><label for="desc">Description</label><textarea id="desc"></textarea></div>
                    <label class="traction"><input type="checkbox"> Traction Transformer</label>
                </fieldset>

                <fieldset class="connection">
                    <legend>Connection</legend>
                    <div class="phase-row">
                        <div class="phases">
                            <label><input type="radio" name="phase" checked disabled> 3-Phase</label>
                            <label><input type="radio" name="phase" disabled> 1-Phase</label>
                        </div>
                        <select aria-label="Core type"><option>Shell</option></select>
                    </div>
                    <label class="center-tap"><input type="checkbox" disabled> Secondary CenterTap</label>
                </fieldset>
            </div>

            <div class="footer">
                <button type="button" class="bevel" aria-label="Copy"><svg viewBox="0 0 18 18"><path d="M1 2h7l2 2v9H1zM8 5h6l3 3v9H8z" fill="#fff" stroke="#1c2a6c" stroke-width="1.5"/><path d="M3 6h4M3 9h4M10 10h5M10 13h5" stroke="#1c2a6c"/></svg></button>
                <button type="button" class="bevel" aria-label="Paste"><svg viewBox="0 0 18 18"><path d="M1 3h13v13H1z" fill="#7f8a3d" stroke="#222"/><path d="M5 1h5v4H5z" fill="#999" stroke="#222"/><path d="M8 7h6l3 3v7H8z" fill="#fff" stroke="#1c2a6c" stroke-width="1.5"/><path d="M10 11h5M10 14h5" stroke="#1c2a6c"/></svg></button>
                <button type="button" class="bevel" aria-label="Undo"><svg viewBox="0 0 18 18"><path d="M3 10c3-6 12-5 12 0 0 3-2 4-4 4" fill="none" stroke="#23305f" stroke-width="1.5"/><path d="M2 6v6h6z" fill="#1c2a8c"/></svg></button>
                <button type="button" class="bevel prev" aria-label="Previous"><svg viewBox="0 0 18 18"><path d="M10 1h5L9 9l6 8h-5L3 9z" fill="#fff" stroke="#1c1c86" stroke-width="2"/></svg></button>
                <select aria-label="Element"><option>T18</option></select>
                <button type="button" class="bevel" aria-label="Next"><svg viewBox="0 0 18 18"><path d="M8 1H3l6 8-6 8h5l7-8z" fill="#fff" stroke="#1c1c86" stroke-width="2"/></svg></button>
                <button type="button" class="bevel find" aria-label="Find"><svg viewBox="0 0 18 18"><use href="#binoc"/></svg></button>
                <button type="button" class="bevel" aria-label="Help"><svg viewBox="0 0 18 18"><text x="4" y="16" font-size="19" fill="#d21c1c">?</text></svg></button>
                <button type="button" class="ok">OK</button>
                <button type="button" class="cancel">Cancel</button>
            </div>
        </div>
    </div>

    <svg class="pointer" width="28" height="28"><circle cx="14" cy="14" r="14"/><path d="M11 6v13l3-3 2 5 2-1-2-5h4z"/></svg>
</form>
</body>
</html>
```

FILE: styles.css
```css
* {
    box-sizing: border-box;
}
body {
    margin: 0;
    height: 100vh;
    padding: 41px 0;
    background: #000;
    font-family: "Noto Sans", "Open Sans", sans-serif;
    font-size: 10px;
    color: #222;
    overflow: hidden;
}
button, select, input, textarea {
    font: inherit;
    color: inherit;
    margin: 0;
}
button {
    border: 0;
    padding: 0;
    background: none;
}
svg {
    display: block;
}
svg text {
    font-family: "Noto Sans", sans-serif;
    font-weight: bold;
}
svg text.plain {
    font-family: "Liberation Sans", sans-serif;
    font-weight: normal;
}
.defs {
    position: absolute;
}
.app {
    display: flex;
    flex-direction: column;
    height: 100%;
    background: #edf3f8;
}

/* title and menu */
.titlebar {
    display: flex;
    align-items: center;
    height: 18px;
    background: #fff;
    color: #8c8c8c;
    padding-left: 1px;
}
.title {
    margin-left: 7px;
    font-family: Roboto, sans-serif;
    font-size: 11px;
    line-height: 14px;
}
.window-controls {
    display: flex;
    gap: 31px;
    margin-left: auto;
    padding-right: 17px;
}
.window-controls svg, .dialog-title button svg {
    fill: none;
    stroke: #888;
}
.menubar {
    display: flex;
    align-items: center;
    gap: 15px;
    height: 24px;
    padding-left: 7px;
    background: #e9eff8;
    color: #111722;
}
.menu-icon {
    margin-right: -6px;
}
.doc-controls {
    display: flex;
    gap: 6px;
    margin-left: auto;
    padding-right: 4px;
}
.doc-controls svg {
    fill: none;
    stroke: #111;
    stroke-width: 2;
}
.doc-controls .thin {
    stroke-width: 1;
}

/* toolbars */
.toolbar {
    display: flex;
    align-items: center;
    background: linear-gradient(#f3f6fb, #c9d0dd);
    border-bottom: 1px solid #a9b1be;
}
.toolbar-main, .toolbar-view {
    height: 25px;
    width: 90%;
}
.toolbar-study {
    height: 39px;
    width: 1187px;
}
.toolbar button {
    display: grid;
    place-items: center;
    flex: none;
    width: 21px;
    height: 21px;
}
.toolbar button svg {
    width: 17px;
    height: 17px;
}
.toolbar-study button {
    width: 41px;
    height: 36px;
}
.toolbar-study button svg {
    width: 30px;
    height: 28px;
}
.toolbar .on, .sidebar .on {
    background: #cfe6f7;
    border: 1px solid #4b95c4;
}
.toolbar-study .on {
    width: 35px;
    margin: 0 3px;
}
.toolbar .off, .faded {
    opacity: 0.5;
}
.dim {
    opacity: 0.8;
}
.grip {
    flex: none;
    width: 3px;
    height: 18px;
    margin: 0 3px 0 2px;
    border-left: 2px dotted #98a0ad;
}
.sep {
    flex: none;
    width: 1px;
    height: 14px;
    margin: 0 3px 0 2px;
    background: #c3cad6;
}
.toolbar-study .sep {
    margin: 0 4px 0 3px;
    background: none;
}
.toolbar-study .curve {
    width: 37px;
    margin-right: 4px;
}
.cap {
    flex: none;
    align-self: stretch;
    width: 10px;
    margin: 0 2px;
    border-radius: 0 6px 6px 0;
    background: linear-gradient(#b9bfcb, #e7ebf2);
    position: relative;
}
.cap::after {
    content: "";
    position: absolute;
    left: 2px;
    bottom: 4px;
    border: 3px solid transparent;
    border-top-color: #111;
    border-bottom: 0;
}
.cap::before {
    content: "";
    position: absolute;
    left: 2px;
    bottom: 9px;
    width: 6px;
    height: 1px;
    background: #111;
}
.filler {
    flex: 1;
}
.last-letter {
    color: #cf2a1c;
    font-weight: bold;
    font-size: 12px;
    padding-top: 18px;
}
.tool-select {
    appearance: none;
    flex: none;
    width: 108px;
    height: 19px;
    border: 0;
    padding: 0 3px;
    margin: 0 2px;
    background: #fff url("data:image/svg+xml,%3Csvg xmlns='http://www.w3.org/2000/svg' width='11' height='15'%3E%3Crect width='11' height='15' fill='%23dfe3ec'/%3E%3Cpath d='M3 6h5l-2.5 3z'/%3E%3C/svg%3E") no-repeat right 1px center;
}
.toolbar-view .case {
    width: 30px;
}
.toolbar-view .case svg {
    width: 20px;
    height: 18px;
}

/* work area */
.workspace {
    display: flex;
    flex: 1;
    min-height: 0;
}
.sidebar {
    display: flex;
    flex-direction: column;
    align-items: center;
    flex: none;
    width: 37px;
    background: linear-gradient(90deg, #eef1f7, #bcc3d0);
    border-right: 1px solid #aab2c0;
}
.sidebar button {
    display: grid;
    place-items: center;
    flex: none;
    width: 35px;
    height: 36px;
}
.sidebar button svg {
    width: 30px;
    height: 30px;
}
.sidebar .off {
    opacity: 0.5;
}
.grip-h {
    flex: none;
    width: 28px;
    height: 4px;
    margin: 3px 0 1px;
    border-top: 2px dotted #98a0ad;
}
.sidebar-end {
    display: flex;
    justify-content: space-between;
    align-self: stretch;
    margin-top: auto;
    padding: 0 3px;
    font-weight: bold;
    line-height: 12px;
}
.sidebar-right {
    width: 37px;
    padding-right: 4px;
    border-right: 0;
}
.sidebar-right .grip-h {
    margin-bottom: 0;
}
.sidebar-right button {
    width: 33px;
    height: 33px;
}
.sidebar-right button svg {
    width: 27px;
    height: 27px;
}
.readout {
    display: flex;
    flex-direction: column;
    align-items: center;
    align-self: stretch;
    line-height: 12px;
    font-size: 11px;
    padding: 0 2px;
    margin-top: 2px;
}
.readout.first {
    margin-top: 6px;
}
.readout svg {
    align-self: flex-end;
}
.readout .left {
    align-self: flex-start;
}
.readout.last {
    margin: 7px 0 4px;
    font-size: 13px;
}
.readout .r {
    color: #b8281e;
}
.readout .b {
    color: #1c50cc;
}
.manager {
    width: 23px;
    flex: none;
    padding-left: 1px;
}
.manager-tab {
    display: flex;
    flex-direction: column;
    align-items: center;
    gap: 8px;
    width: 18px;
    padding: 5px 0 17px;
    background: #f1f1f1;
    border: 1px solid #d4d8dc;
    border-top: 0;
    color: #666;
}
.manager-tab span {
    writing-mode: vertical-rl;
    font-size: 11px;
    line-height: 14px;
}
.center {
    display: flex;
    flex-direction: column;
    flex: 1;
    min-width: 0;
}
.canvas-frame {
    display: grid;
    grid-template-columns: 1fr 16px;
    grid-template-rows: 1fr 16px;
    flex: 1;
    min-height: 0;
    margin-right: 2px;
    border-left: 2px solid #80868c;
    border-top: 2px solid #80868c;
    background: #f0f0f0;
}
.diagram {
    width: 100%;
    height: 100%;
    overflow: hidden;
    background: #fefefb;
}
.diagram pattern path {
    stroke: #f9f9f4;
    fill: none;
}
.highlight {
    fill: #b3f5f5;
}
.wire {
    stroke: #666;
    stroke-width: 2;
}
.symbol {
    fill: none;
    stroke: #222;
}
.diagram rect.symbol {
    fill: #fefefb;
}
.red-symbol {
    fill: none;
    stroke: #d2554a;
    stroke-width: 1.5;
}
.red-symbol .gen {
    fill: #fefefb;
}
.bus {
    stroke: #000;
    stroke-width: 4;
}
.arrow {
    stroke: #000;
}
.diagram text {
    font-family: Lato, "Open Sans", sans-serif;
    font-size: 13px;
    font-weight: normal;
}
.diagram text.bold {
    font-weight: bold;
}
.blue {
    fill: #1f2aa6;
}
.red {
    fill: #cf3a26;
}
.flow {
    fill: #d0503f;
}
.vscroll, .hscroll {
    display: flex;
    align-items: center;
}
.vscroll {
    flex-direction: column;
    padding: 4px 0;
}
.hscroll {
    padding: 0 4px;
}
.vscroll svg, .hscroll svg {
    fill: none;
    stroke: #444;
    stroke-width: 2;
}
.thumb {
    background: #cdcdcd;
}
.vscroll .thumb {
    width: 13px;
    height: 16px;
    margin-top: 6px;
}
.hscroll .thumb {
    width: 16px;
    height: 13px;
    margin-left: 33px;
}
.vscroll .end {
    margin-top: auto;
}
.hscroll .end {
    margin-left: auto;
}
.message-log {
    align-self: flex-start;
    margin: 4px 0 0 2px;
    padding: 0 20px 0 5px;
    height: 17px;
    line-height: 17px;
    font-size: 11px;
    background: #f4f4f4;
    border-right: 1px solid #d5d9de;
    color: #666;
}

/* transformer editor window */
.dialog {
    position: absolute;
    left: 650px;
    top: 68px;
    width: 513px;
    background: #f0f0ee;
    border: 1px solid #7d8388;
    box-shadow: 0 0 10px rgba(0, 0, 0, 0.4);
    font-family: "Liberation Sans", Arial, sans-serif;
}
.dialog-title {
    display: flex;
    align-items: center;
    gap: 6px;
    height: 27px;
    padding: 0 8px;
    background: #fff;
    font-family: Roboto, sans-serif;
    font-size: 11px;
}
.dialog-title button {
    margin-left: auto;
}
.dialog-title button svg {
    stroke: #222;
}
.dialog-body {
    padding: 9px 9px 6px 5px;
}
.tabs {
    display: flex;
    height: 17px;
    padding: 0 1px;
}
.tabs button {
    flex: 1;
    border: 1px solid #dcdcdc;
    border-width: 1px 1px 0 0;
}
.tabs button:first-child {
    border-left-width: 1px;
}
.tabs-back button:nth-child(-n+2) {
    flex: 96;
}
.tabs-back button:nth-child(3) {
    flex: 115;
}
.tabs-back button:nth-child(n+4) {
    flex: 93;
}
.tabs-front button {
    flex: 63;
}
.tabs-front button:nth-child(3), .tabs-front button:nth-child(5) {
    flex: 83;
}
.tabs-front button:nth-child(7) {
    flex: 77;
}
.tabs-front .active {
    background: #fefefc;
    padding-bottom: 4px;
}
.panel {
    padding: 9px 9px 8px;
    background: #fefefc;
    border: 1px solid #e2e2e2;
    border-top: 0;
}
.summary {
    display: flex;
    gap: 6px;
    height: 18px;
    padding: 0 22px 0 10px;
    line-height: 15px;
    border: 1px solid #e3e3e3;
    border-top: 2px solid #777;
    border-left: 2px solid #777;
}
.summary .volts {
    margin-left: auto;
    margin-right: 6px;
}
.groups {
    display: grid;
    grid-template-columns: 278fr 190fr;
    gap: 12px 9px;
    margin-top: 13px;
}
fieldset {
    margin: 0;
    padding: 0;
    min-width: 0;
    border: 1px solid #dcdcdc;
}
legend {
    margin-left: 4px;
    padding: 0 3px;
    line-height: 12px;
}
.dialog label {
    display: flex;
    align-items: center;
    gap: 3px;
    line-height: 14px;
}
.field {
    display: flex;
    align-items: center;
}
.dialog input[type="text"], textarea {
    height: 19px;
    padding: 0 2px;
    background: #fff;
    border: 1px solid #808080;
    border-radius: 0;
    outline: none;
}
.dialog select {
    appearance: none;
    height: 20px;
    padding: 0 3px;
    border: 1px solid #b4b4b4;
    border-radius: 0;
    background: #e2e2e1 url("data:image/svg+xml,%3Csvg xmlns='http://www.w3.org/2000/svg' width='9' height='6'%3E%3Cpath d='M1 1l3.5 3.5L8 1' fill='none' stroke='%23555'/%3E%3C/svg%3E") no-repeat right 3px center;
}
.dialog input[type="radio"], .dialog input[type="checkbox"] {
    appearance: none;
    flex: none;
    width: 12px;
    height: 12px;
    border: 1px solid #333;
    background: #fff;
}
.dialog input[type="radio"] {
    border-radius: 50%;
}
.dialog input[type="radio"]:checked {
    background: radial-gradient(circle, #222 3px, #fff 4px);
}
.dialog input:disabled {
    border-color: #c4c4c4;
}
.dialog input[type="radio"]:disabled:checked {
    background: radial-gradient(circle, #bbb 3px, #fff 4px);
}
.info {
    padding: 15px 0 12px;
}
.info .field label {
    justify-content: flex-end;
    width: 35px;
    margin-right: 4px;
}
.info .field input, .info .field select {
    width: 178px;
    margin-right: 5px;
}
.dialog .info #id {
    border-color: #3f7ba3;
}
.id-row {
    margin-bottom: 20px;
}
.prim-row {
    margin-bottom: 12px;
}
.side {
    display: flex;
    flex-direction: column;
    justify-content: space-between;
}
.side-buttons {
    display: flex;
    gap: 47px;
    padding: 12px 0 0 70px;
}
.symbol-btn {
    display: grid;
    place-items: center;
    width: 22px;
    height: 22px;
    background: #e2e2e2;
    border: 1px solid #bbb;
}
.lock-btn {
    display: grid;
    place-items: center;
    width: 33px;
    height: 36px;
    border: 1px solid #777;
    border-right-width: 2px;
    border-bottom-width: 2px;
}
.revision {
    padding: 17px 25px 16px 24px;
}
.revision legend {
    margin-left: -20px;
}
.dialog .revision input {
    display: block;
    width: 100%;
    height: 18px;
    text-align: center;
    border: 1px solid #e3e3e3;
    border-top: 2px solid #777;
    border-left: 2px solid #777;
}
.standard {
    padding: 21px 0 31px 66px;
}
.standard legend {
    margin-left: -62px;
}
.standard label + label {
    margin-top: 11px;
}
.condition {
    padding-top: 4px;
}
.condition .name {
    justify-content: flex-end;
    width: 44px;
    margin-right: 11px;
    text-align: right;
}
.radios label {
    height: 18px;
}
.service {
    margin-bottom: 4px;
}
.condition select {
    width: 106px;
}
.equipment {
    padding: 10px 9px 8px 0;
}
.equipment .field label {
    justify-content: flex-end;
    width: 58px;
    margin-right: 4px;
}
.equipment .field input, textarea {
    flex: 1;
}
.tag-row {
    margin-bottom: 18px;
}
.name-row {
    margin-bottom: 11px;
}
.desc-row {
    align-items: flex-start;
    margin-bottom: 9px;
}
.desc-row label {
    padding-top: 9px;
}
textarea {
    height: 56px;
    resize: none;
}
.traction {
    padding-left: 63px;
}
.connection {
    padding: 20px 16px 0;
    color: #808080;
}
.connection legend {
    margin-left: -12px;
    color: #222;
}
.phase-row {
    display: flex;
    justify-content: space-between;
}
.phases label + label {
    margin-top: 9px;
}
.phases label:first-child {
    margin-top: 3px;
}
.connection select {
    width: 85px;
    color: #222;
}
.center-tap {
    margin-top: 57px;
}
.footer {
    display: flex;
    align-items: center;
    gap: 4px;
    margin-top: 20px;
    padding-right: 10px;
}
.bevel {
    flex: none;
    display: grid;
    place-items: center;
    width: 20px;
    height: 20px;
    background: #dcdcdc;
    border: 1px solid #999;
    border-right: 2px solid #666;
    border-bottom: 2px solid #666;
}
.bevel svg {
    width: 16px;
    height: 16px;
}
.prev, .find, .ok {
    margin-left: 10px;
}
.footer select {
    flex: 1;
    margin: 0 -2px;
}
.ok, .cancel {
    height: 24px;
    background: #e4e4e4;
    border: 1px solid #b4b4b4;
}
.ok {
    width: 38px;
    border: 3px double #2272b4;
    outline: 1px solid #aaa;
}
.cancel {
    width: 45px;
}
.pointer {
    position: absolute;
    left: 94px;
    top: 68px;
}
.pointer circle {
    fill: #f3e713;
    opacity: 0.85;
}
.pointer path {
    fill: #fff;
    stroke: #444;
}
```
